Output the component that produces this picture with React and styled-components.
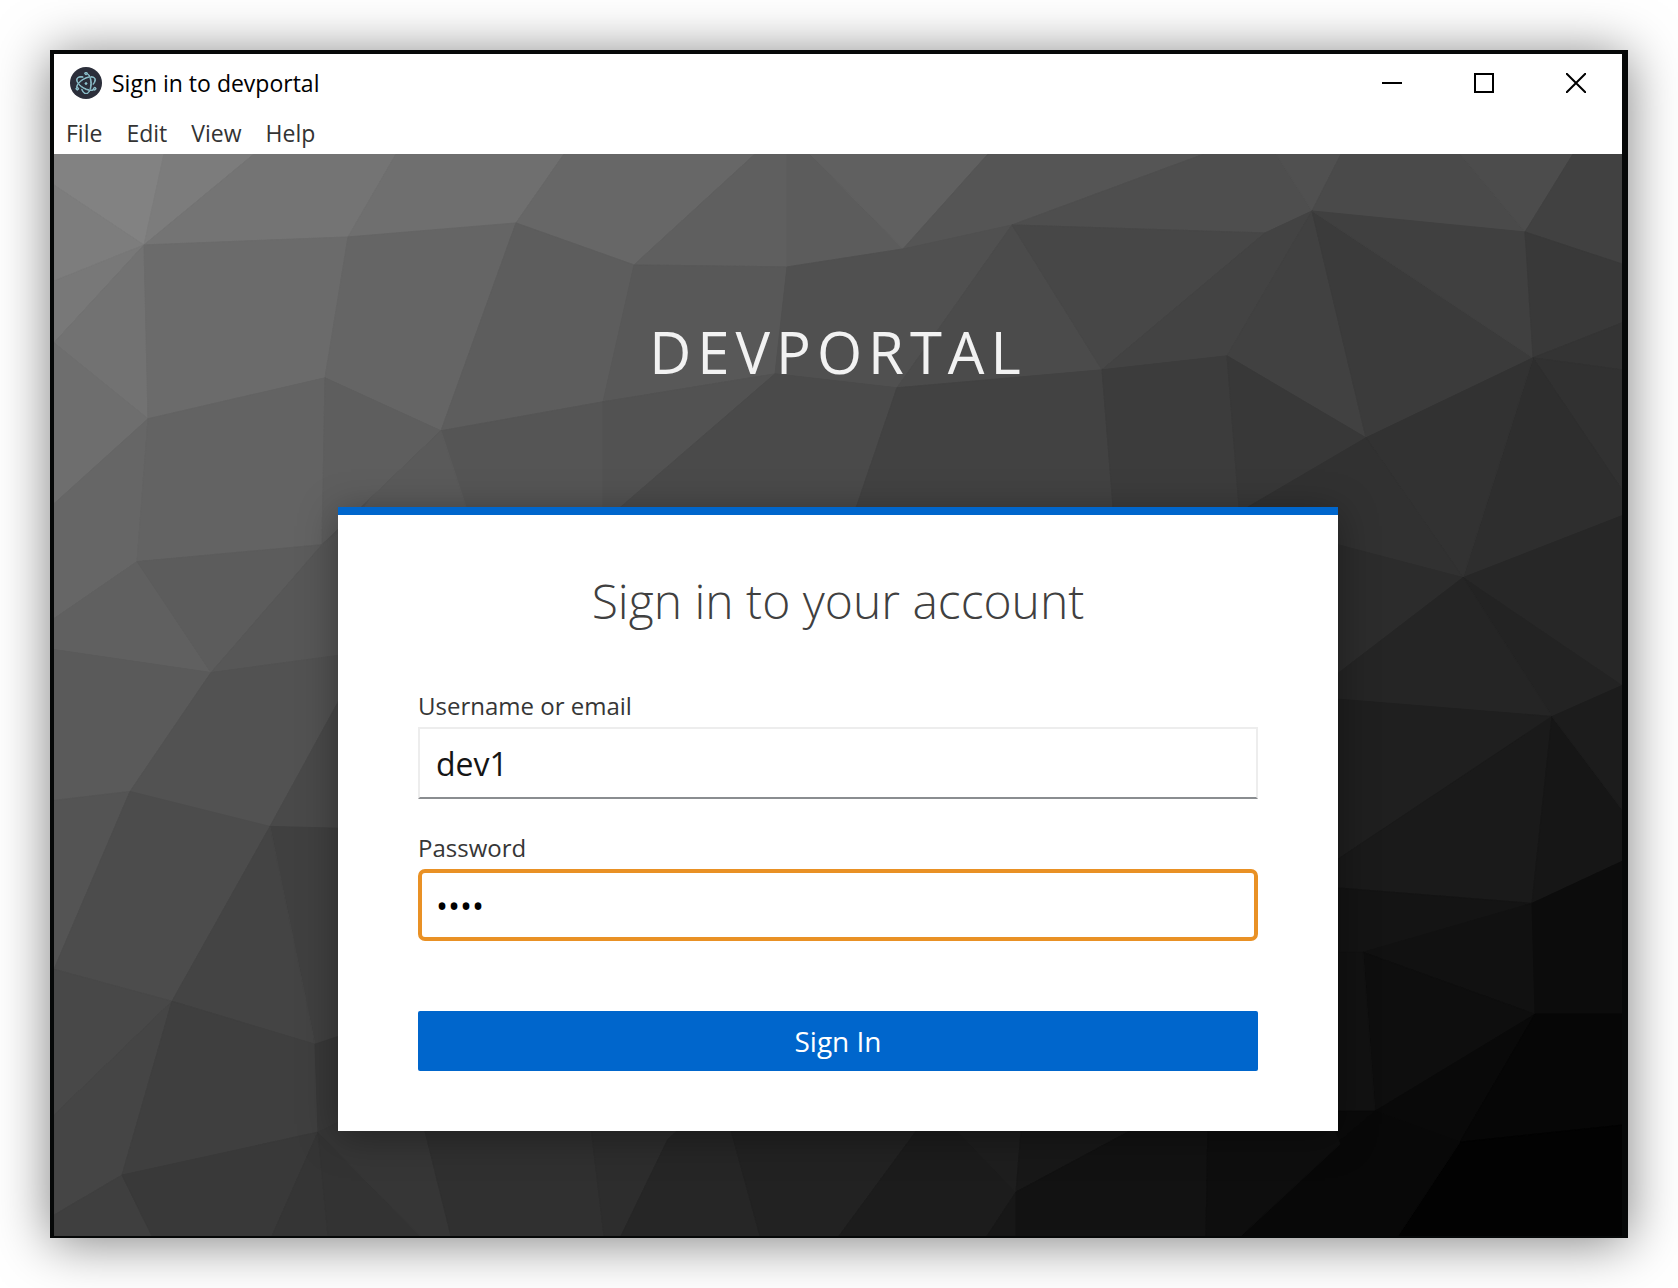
import React from "react";
import styled, { createGlobalStyle } from "styled-components";
import { SiElectron } from "react-icons/si";

const GlobalStyle = createGlobalStyle`
  *, *::before, *::after { box-sizing: border-box; }
  body {
    margin: 0;
    background: #fff;
    font-family: "Open Sans", "Noto Sans", sans-serif;
  }
`;

const Desktop = styled.div`
  display: flex;
  min-height: 100vh;
  padding: 50px;
`;

const Window = styled.div`
  flex: 1;
  display: flex;
  flex-direction: column;
  min-width: 0;
  border: solid #060808;
  border-width: 4px 6px 2px 4px;
  background: #fff;
  box-shadow: 0 4px 50px rgba(0, 0, 0, 0.5);
`;

const TitleBar = styled.header`
  display: flex;
  align-items: center;
  height: 58px;
  padding-left: 16px;
`;

const AppIcon = styled.span`
  display: grid;
  place-items: center;
  width: 32px;
  height: 32px;
  margin-right: 10px;
  border-radius: 50%;
  background: #2b2e3a;
  color: #8fc4cf;
`;

const WindowTitle = styled.span`
  flex: 1;
  color: #000;
  font-size: 23px;
  line-height: 32px;
`;

const WindowButton = styled.button`
  display: grid;
  place-items: center;
  width: 92px;
  height: 58px;
  padding: 0;
  border: 0;
  background: none;
  color: #000;
`;

const MenuBar = styled.nav`
  display: flex;
  height: 42px;
`;

const MenuButton = styled.button`
  padding: 0 12px;
  border: 0;
  background: none;
  color: #333;
  font: 400 23px/32px "Open Sans", "Noto Sans", sans-serif;
`;

const Client = styled.main`
  position: relative;
  flex: 1;
  display: flex;
  flex-direction: column;
  align-items: center;
  padding: 158px 40px 60px;
  background: #3c3c3c;
  overflow: hidden;
`;

const Backdrop = styled.svg`
  position: absolute;
  inset: 0;
  width: 100%;
  height: 100%;
`;

const Realm = styled.h1`
  position: relative;
  margin: 0 0 115px;
  color: #f2f2f2;
  font-weight: 400;
  font-size: 58px;
  line-height: 80px;
  letter-spacing: 6px;
  text-transform: uppercase;
`;

const Card = styled.form`
  position: relative;
  display: flex;
  flex-direction: column;
  width: 100%;
  max-width: 1000px;
  padding: 54px 80px 60px;
  border-top: 8px solid #0066cc;
  background: #fff;
  box-shadow: 0 6px 36px rgba(0, 0, 0, 0.35);
`;

const CardTitle = styled.h2`
  margin: 0 0 58px;
  color: #404040;
  font-weight: 300;
  font-size: 48px;
  line-height: 64px;
  text-align: center;
`;

const Field = styled.div`
  display: flex;
  flex-direction: column;
  margin-bottom: ${(p) => (p.$last ? 70 : 34)}px;
`;

const Label = styled.label`
  margin-bottom: 6px;
  color: #363636;
  font-size: 24px;
  line-height: 30px;
`;

const TextBox = styled.input`
  width: 100%;
  height: 72px;
  padding: 0 16px;
  border: 2px solid #ededed;
  border-bottom-color: #8a8d90;
  border-radius: 0;
  outline: 0;
  background: #fff;
  color: #151515;
  font: 400 32px/48px "Open Sans", "Noto Sans", sans-serif;

  ${(p) =>
    p.$active &&
    `
    padding: 0 14px;
    border: 4px solid #e99125;
    border-radius: 7px;
    color: #000;
  `}
`;

const Submit = styled.button`
  height: 60px;
  border: 0;
  border-radius: 2px;
  background: #0066cc;
  color: #fff;
  font: 400 28px/40px "Open Sans", "Noto Sans", sans-serif;
`;

/* Facets of the low-poly wallpaper: grey level (hex pair) and corner points. */
const FACETS = [
  ["82", "54,154 164,154 144,245 54,185"],
  ["7d", "54,185 144,245 54,281"],
  ["7c", "164,154 254,154 144,245"],
  ["74", "254,154 396,154 348,237 144,245"],
  ["6f", "396,154 564,154 516,223 348,237"],
  ["67", "564,154 755,154 634,265 516,223"],
  ["5f", "755,154 787,154 787,267 634,265"],
  ["5c", "787,154 810,154 903,249 787,267"],
  ["60", "810,154 988,154 903,249"],
  ["55", "988,154 1204,154 1012,225 903,249"],
  ["4e", "1204,154 1276,154 1312,211 1265,233 1012,225"],
  ["50", "1276,154 1341,154 1312,211"],
  ["4a", "1341,154 1460,154 1525,232 1312,211"],
  ["4c", "1460,154 1573,154 1525,232"],
  ["41", "1573,154 1622,154 1622,264 1525,232"],
  ["78", "54,281 144,245 54,343"],
  ["72", "144,245 148,419 54,343"],
  ["6e", "54,343 148,419 54,504"],
  ["6b", "144,245 348,237 325,378 148,419"],
  ["65", "348,237 516,223 441,431 325,378"],
  ["5d", "516,223 634,265 603,402 441,431"],
  ["58", "634,265 787,267 775,374 603,402"],
  ["50", "787,267 903,249 1012,225 897,388 775,374"],
  ["4b", "1012,225 1102,370 897,388"],
  ["47", "1012,225 1265,233 1102,370"],
  ["43", "1265,233 1312,211 1227,356 1102,370"],
  ["41", "1312,211 1366,438 1227,356"],
  ["3b", "1312,211 1533,358 1366,438"],
  ["40", "1312,211 1525,232 1533,358"],
  ["39", "1525,232 1622,264 1622,323 1533,358"],
  ["34", "1533,358 1622,323 1622,370"],
  ["31", "1533,358 1622,370 1622,490"],
  ["2e", "1533,358 1622,490 1622,516 1463,578"],
  ["32", "1366,438 1533,358 1463,578"],
  ["66", "148,419 54,504 54,619 137,562"],
  ["63", "148,419 325,378 322,545 137,562"],
  ["5e", "325,378 441,431 322,545"],
  ["55", "441,431 603,402 620,560 322,560 322,545"],
  ["5a", "441,431 371,498 330,560 467,510"],
  ["52", "603,402 775,374 620,508 603,508"],
  ["4a", "775,374 897,388 852,520 606,520"],
  ["42", "897,388 1102,370 1114,520 852,520"],
  ["3c", "1102,370 1227,356 1240,520 1114,520"],
  ["38", "1227,356 1366,438 1240,520"],
  ["31", "1366,438 1463,578 1330,543 1240,512"],
  ["2c", "1330,543 1463,578 1330,680"],
  ["27", "1463,578 1622,516 1622,686"],
  ["23", "1463,578 1622,686 1552,717"],
  ["25", "1463,578 1552,717 1330,700 1330,680"],
  ["1f", "1552,717 1350,855 1330,865 1330,699"],
  ["1a", "1552,717 1532,904 1330,888 1330,865"],
  ["16", "1552,717 1622,810 1622,862 1532,904"],
  ["1c", "1552,717 1622,686 1622,810"],
  ["14", "1532,904 1363,953 1330,953 1330,888"],
  ["11", "1532,904 1535,1015 1363,953"],
  ["0c", "1532,904 1622,862 1622,1015 1535,1015"],
  ["0e", "1363,953 1535,1015 1375,1112"],
  ["12", "1330,953 1363,953 1375,1112 1330,1112"],
  ["09", "1535,1015 1460,1143 1375,1112"],
  ["06", "1535,1015 1622,1015 1622,1126 1460,1143"],
  ["02", "1460,1143 1622,1126 1622,1237 1398,1237"],
  ["0a", "1330,1112 1375,1112 1330,1150"],
  ["08", "1375,1112 1460,1143 1398,1237 1241,1237 1330,1150"],
  ["60", "54,619 137,562 211,673 54,650"],
  ["5c", "137,562 322,545 211,673"],
  ["57", "322,545 345,530 345,655 211,673"],
  ["5a", "54,650 211,673 130,792 54,801"],
  ["52", "211,673 345,655 345,690 270,827 130,792"],
  ["54", "54,801 130,792 54,970"],
  ["4c", "130,792 270,827 172,1002 54,970"],
  ["49", "270,827 345,690 345,829"],
  ["40", "270,827 345,829 345,1035 315,1045"],
  ["44", "270,827 315,1045 172,1002"],
  ["48", "54,970 172,1002 54,1116"],
  ["45", "54,1116 172,1002 122,1176 54,1216"],
  ["3f", "172,1002 315,1045 318,1133 122,1176"],
  ["38", "315,1045 345,1035 345,1128 318,1133"],
  ["3f", "54,1216 122,1176 152,1237 54,1237"],
  ["39", "122,1176 318,1133 272,1237 152,1237"],
  ["35", "318,1133 328,1237 272,1237"],
  ["33", "318,1133 420,1237 328,1237"],
  ["36", "318,1133 345,1120 422,1120 451,1237 420,1237"],
  ["30", "422,1120 590,1120 604,1237 451,1237"],
  ["2d", "590,1120 690,1120 668,1140 621,1237 604,1237"],
  ["26", "690,1120 728,1120 760,1237 621,1237 668,1140"],
  ["22", "728,1120 925,1120 839,1237 760,1237"],
  ["1c", "925,1120 946,1120 1016,1193 987,1237 839,1237"],
  ["1e", "946,1120 1022,1120 1016,1193"],
  ["18", "1022,1120 1152,1120 1016,1193"],
  ["17", "1016,1193 1016,1237 987,1237"],
  ["12", "1152,1120 1208,1120 1206,1237 1016,1237 1016,1193"],
  ["0e", "1208,1120 1330,1120 1340,1145 1241,1237 1206,1237"],
];

function Wallpaper() {
  return (
    <Backdrop viewBox="54 154 1568 1083" preserveAspectRatio="none" aria-hidden="true">
      {FACETS.map(([level, points], i) => {
        const color = `#${level}${level}${level}`;
        return <polygon key={i} points={points} fill={color} stroke={color} strokeWidth="1" />;
      })}
    </Backdrop>
  );
}

export default function App() {
  return (
    <>
      <GlobalStyle />
      <Desktop>
        <Window>
          <TitleBar>
            <AppIcon>
              <SiElectron size={22} stroke="currentColor" strokeWidth={1} />
            </AppIcon>
            <WindowTitle>Sign in to devportal</WindowTitle>
            <WindowButton type="button" aria-label="Minimize">
              <svg width="20" height="20" stroke="currentColor" strokeWidth="2">
                <path d="M0 10H20" />
              </svg>
            </WindowButton>
            <WindowButton type="button" aria-label="Maximize">
              <svg width="20" height="20" fill="none" stroke="currentColor" strokeWidth="2">
                <path d="M1 1H19V19H1Z" />
              </svg>
            </WindowButton>
            <WindowButton type="button" aria-label="Close">
              <svg width="20" height="20" stroke="currentColor" strokeWidth="2">
                <path d="M0 0L20 20M20 0L0 20" />
              </svg>
            </WindowButton>
          </TitleBar>
          <MenuBar aria-label="Application menu">
            {["File", "Edit", "View", "Help"].map((name) => (
              <MenuButton type="button" key={name}>
                {name}
              </MenuButton>
            ))}
          </MenuBar>
          <Client>
            <Wallpaper />
            <Realm>devportal</Realm>
            <Card onSubmit={(e) => e.preventDefault()}>
              <CardTitle>Sign in to your account</CardTitle>
              <Field>
                <Label htmlFor="username">Username or email</Label>
                <TextBox id="username" type="text" defaultValue="dev1" autoComplete="off" />
              </Field>
              <Field $last>
                <Label htmlFor="password">Password</Label>
                <TextBox id="password" type="password" defaultValue="dev1" autoComplete="off" $active />
              </Field>
              <Submit type="submit">Sign In</Submit>
            </Card>
          </Client>
        </Window>
      </Desktop>
    </>
  );
}
